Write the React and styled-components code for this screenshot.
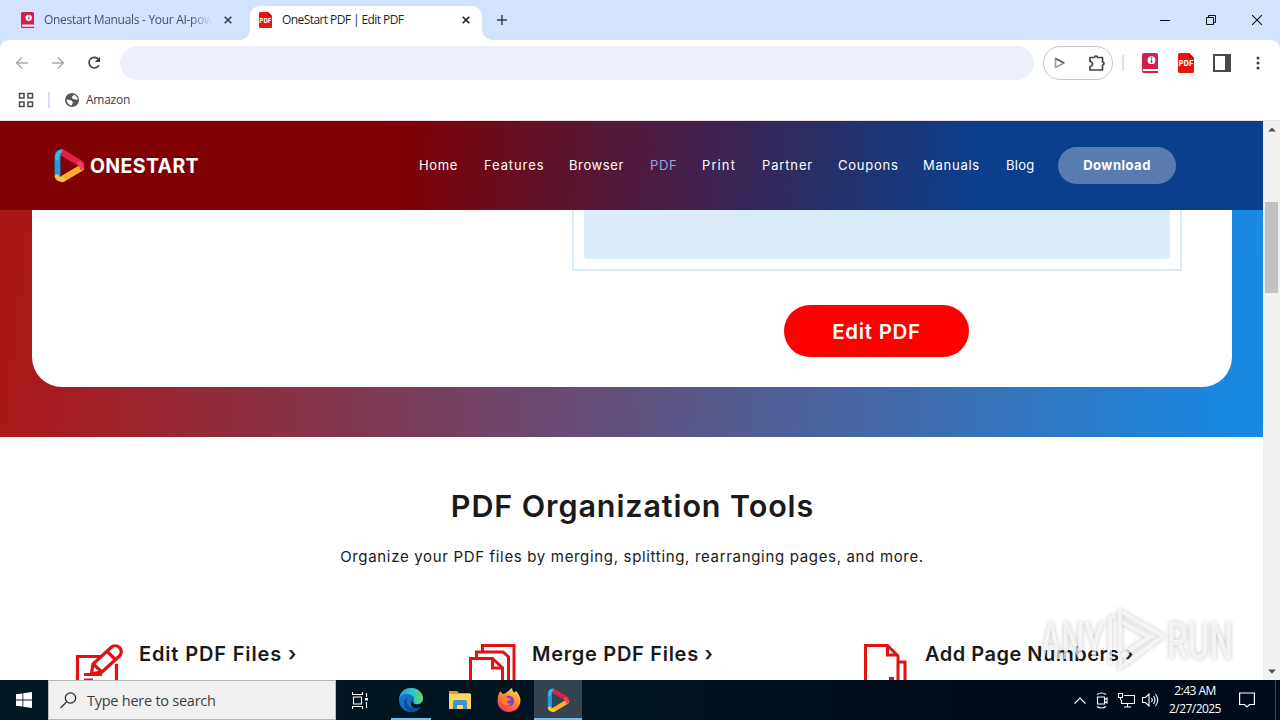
import React from 'react';
import styled, { createGlobalStyle } from 'styled-components';

const GlobalStyle = createGlobalStyle`
  * {
    box-sizing: border-box;
  }

  body {
    margin: 0;
    overflow: hidden;
    font-family: 'Open Sans', 'Noto Sans', sans-serif;
  }

  svg {
    display: block;
    flex: none;
  }
`;

const Screen = styled.div`
  position: relative;
  display: flex;
  flex-direction: column;
  width: 1280px;
  height: 720px;
  overflow: hidden;
  background: #fff;
`;

/* browser chrome */

const TabStrip = styled.div`
  display: flex;
  height: 40px;
  background: #d3e3fd;
`;

const Tab = styled.div`
  position: relative;
  display: flex;
  align-items: center;
  width: ${(props) => props.$width}px;
  height: 34px;
  margin-top: 6px;
  padding: 0 ${(props) => (props.$active ? 12 : 18)}px 6px ${(props) => props.$indent}px;
  border-radius: 10px 10px 0 0;
  background: ${(props) => (props.$active ? '#fff' : 'transparent')};
  color: ${(props) => (props.$active ? '#1f1f1f' : '#41506b')};

  &::before,
  &::after {
    content: '';
    display: ${(props) => (props.$active ? 'block' : 'none')};
    position: absolute;
    bottom: 0;
    width: 10px;
    height: 10px;
  }

  &::before {
    left: -10px;
    background: radial-gradient(circle at 0 0, transparent 9.5px, #fff 10px);
  }

  &::after {
    right: -10px;
    background: radial-gradient(circle at 100% 0, transparent 9.5px, #fff 10px);
  }
`;

const TabTitle = styled.span`
  width: ${(props) => props.$width}px;
  margin-left: 10px;
  overflow: hidden;
  white-space: nowrap;
  font-size: 12px;
  line-height: 16px;
  letter-spacing: ${(props) => props.$spacing}px;
  mask-image: ${(props) =>
    props.$fade ? 'linear-gradient(90deg, #000 87%, transparent)' : 'none'};
`;

const TabClose = styled.span`
  margin-left: auto;
`;

const NewTab = styled.div`
  padding: 15px 0 0 15px;
`;

const WindowButtons = styled.div`
  display: flex;
  gap: 36px;
  margin-left: auto;
  padding: 15px 18px 0 0;
`;

const Toolbar = styled.div`
  display: flex;
  align-items: center;
  height: 46px;
  background: #fff;
  border-radius: 9px 9px 0 0;
  box-shadow: 0 -10px 0 #d3e3fd;
`;

const NavButtons = styled.div`
  display: flex;
  gap: 20px;
  padding-left: 14px;
`;

const AddressBar = styled.div`
  width: 914px;
  height: 34px;
  margin-left: 16px;
  border-radius: 17px;
  background: #ebf0fa;
`;

const ExtensionPill = styled.div`
  display: flex;
  align-items: center;
  justify-content: space-between;
  width: 70px;
  height: 34px;
  margin-left: 9px;
  padding: 0 6px 0 9px;
  border: 1px solid #c9c4cb;
  border-radius: 17px;
`;

const Separator = styled.div`
  width: 2px;
  height: 16px;
  background: #d3e3fd;
  margin: ${(props) => props.$margin};
`;

const ToolbarIcons = styled.div`
  display: flex;
  align-items: center;
`;

const IconSlot = styled.div`
  display: flex;
  justify-content: center;
  width: 36px;
`;

const Bookmarks = styled.div`
  display: flex;
  align-items: center;
  height: 35px;
  padding: 0 0 7px 18px;
  border-bottom: 1px solid #ecdfe2;
  font-size: 12px;
  color: #3c4043;
`;

const BookmarkLabel = styled.span`
  margin-left: 7px;
  letter-spacing: -0.25px;
`;

/* web page */

const Viewport = styled.div`
  display: flex;
  height: 559px;
`;

const Page = styled.main`
  width: 1263px;
  overflow: hidden;
  background: #fff;
  font-family: Inter, 'Open Sans', sans-serif;
  color: #1a1a1a;
`;

const Header = styled.header`
  display: flex;
  align-items: center;
  height: 89px;
  padding-left: 53px;
  background: linear-gradient(95deg, #800004 31%, #0a3f8c 77%);
`;

const Brand = styled.div`
  display: flex;
  align-items: center;
  width: 366px;
  gap: 4px;
`;

const BrandName = styled.span`
  color: #fff;
  font-size: 19.5px;
  font-weight: 700;
  letter-spacing: 0.35px;
`;

const SiteNav = styled.nav`
  display: grid;
  grid-template-columns: 65px 85px 81px 52px 60px 76px 85px 83px 52px 118px;
  align-items: center;
`;

const NavLink = styled.a`
  padding-bottom: 2px;
  color: ${(props) => (props.$current ? '#93a9e0' : '#fff')};
  font-size: 13px;
  line-height: 20px;
  letter-spacing: ${(props) => props.$spacing}px;
  white-space: nowrap;
`;

const DownloadButton = styled.button`
  height: 37px;
  padding: 0 0 1px;
  border: 0;
  border-radius: 19px;
  background: #5a7bb0;
  color: #fff;
  font: 700 13px Inter, sans-serif;
  letter-spacing: 0.5px;
`;

const Hero = styled.section`
  height: 227px;
  padding: 0 31px 50px 32px;
  background: linear-gradient(97deg, #ab1717 2%, #1889e2 98%);
`;

const HeroCard = styled.div`
  display: flex;
  flex-direction: column;
  align-items: flex-end;
  width: 1200px;
  height: 177px;
  padding-right: 50px;
  border-radius: 0 0 30px 30px;
  background: #fff;
`;

const UploadFrame = styled.div`
  width: 610px;
  height: 61px;
  padding: 0 10px 10px;
  border: 2px solid #dcebf5;
  border-top: 0;
`;

const UploadArea = styled.div`
  height: 49px;
  border-radius: 0 0 3px 3px;
  background: #daecf8;
`;

const EditButton = styled.button`
  width: 185px;
  height: 52px;
  margin: 34px 213px 0 0;
  padding: 0;
  border: 0;
  border-radius: 26px;
  background: #f00;
  color: #fff;
  font: 600 20.5px Inter, sans-serif;
  letter-spacing: 0.7px;
`;

const Tools = styled.section`
  padding-top: 48px;
  text-align: center;
`;

const Title = styled.h2`
  margin: 0;
  padding-left: 2px;
  font-size: 30.5px;
  font-weight: 600;
  line-height: 42px;
  letter-spacing: 0.9px;
`;

const Subtitle = styled.p`
  margin: 17px 0 0;
  padding-left: 1px;
  font-size: 15px;
  line-height: 26px;
  letter-spacing: 0.67px;
`;

const ToolGrid = styled.div`
  display: grid;
  grid-template-columns: repeat(3, 393px);
  padding: 74px 0 0 75px;
`;

const Tool = styled.div`
  display: flex;
  gap: 16px;
`;

const ToolName = styled.h3`
  margin: -5px 0 0;
  font-size: 20px;
  font-weight: 600;
  line-height: 30px;
  letter-spacing: ${(props) => props.$spacing}px;
  white-space: nowrap;
`;

const Scrollbar = styled.div`
  display: flex;
  flex-direction: column;
  align-items: center;
  width: 17px;
  padding: 6px 0;
  background: #f1f1f1;
`;

const Thumb = styled.div`
  width: 13px;
  height: 91px;
  margin: 70px 0 auto;
  background: #c1c1c1;
`;

const Watermark = styled.div`
  position: absolute;
  left: 1034px;
  top: 604px;
  filter: drop-shadow(0 0 2px rgba(0, 0, 0, 0.32));
`;

/* taskbar */

const Taskbar = styled.footer`
  display: flex;
  height: 40px;
  background: linear-gradient(90deg, #001820 0, #00141f 50%, #000b1a 78%);
  color: #fff;
`;

const StartButton = styled.div`
  display: flex;
  align-items: center;
  justify-content: center;
  width: 48px;
`;

const SearchBox = styled.div`
  display: flex;
  align-items: center;
  gap: 10px;
  width: 288px;
  padding-left: 11px;
  border: 1px solid #b9b9b9;
  background: #f1f1f1;
  color: #3d3d3d;
  font-size: 14.5px;
  letter-spacing: -0.25px;
`;

const Pinned = styled.div`
  display: flex;
  align-items: center;
  justify-content: center;
  width: 48px;
  margin-right: ${(props) => props.$gap || 0}px;
  background: ${(props) => (props.$focused ? '#34444e' : 'none')};
  box-shadow: ${(props) => (props.$focused ? 'inset 0 -2px #76b9ed' : 'none')};
`;

const Running = styled.div`
  display: flex;
  align-items: center;
  justify-content: center;
  width: 40px;
  height: 40px;
  border-bottom: 2px solid #76b9ed;
  padding-top: 2px;
`;

const Tray = styled.div`
  display: flex;
  align-items: center;
  gap: 7px;
  margin-left: auto;
`;

const Clock = styled.div`
  width: 56px;
  font-size: 12px;
  line-height: 18px;
  letter-spacing: -0.55px;
  text-align: center;
  white-space: nowrap;
`;

const ShowDesktop = styled.div`
  width: 5px;
  height: 40px;
  margin-left: 13px;
  border-left: 1px solid #3d4853;
`;

function CrossIcon({ color = '#3c4043' }) {
  return (
    <svg width="8" height="8" viewBox="0 0 8 8">
      <path d="M0.7 0.7l6.6 6.6M7.3 0.7l-6.6 6.6" stroke={color} strokeWidth="1.6" />
    </svg>
  );
}

function ManualIcon({ width, height }) {
  return (
    <svg width={width} height={height} viewBox="0 0 16 20" preserveAspectRatio="none">
      <path d="M2 0h12q2 0 2 2v14H2q-1 0-1 1t1 1h14v2H2q-2 0-2-2V2q0-2 2-2z" fill="#d11f4c" />
      <path d="M2 16h13v2H2q-1 0-1-1t1-1z" fill="#fff" />
      <circle cx="9.5" cy="7.2" r="3.9" fill="#fff" />
      <path d="M9.5 6.5v3.3M9.5 4.3v1.3" stroke="#b0163d" strokeWidth="1.4" />
    </svg>
  );
}

function PdfIcon({ width, height }) {
  return (
    <svg width={width} height={height} viewBox="0 0 16 20" preserveAspectRatio="none">
      <path d="M1.500 0H11l5 5v13.500q0 1.500-1.500 1.500h-13Q0 20 0 18.500v-17Q0 0 1.500 0z" fill="#e8140f" />
      <path d="M11 0l5 5h-4q-1 0-1-1z" fill="#a80f0c" />
      <text
        x="8"
        y="13.400"
        fill="#fff"
        fontFamily="Inter, sans-serif"
        fontSize="7"
        fontWeight="800"
        textAnchor="middle"
        textLength="14.500"
      >
        PDF
      </text>
    </svg>
  );
}

function OneStartMark({ width, height }) {
  return (
    <svg width={width} height={height} viewBox="0 0 32 34" fill="none" strokeLinecap="round">
      <path d="M9 30L27.500 19" stroke="#fbb02d" strokeWidth="6.200" />
      <path d="M4 27V8q0-4 4-5" stroke="#1f9be6" strokeWidth="5.800" />
      <path d="M9.500 4L27 14.500" stroke="#e0214d" strokeWidth="6.200" />
      <path d="M7 2.500Q3.500 4 3.500 10" stroke="#34bde8" strokeWidth="3.500" />
      <path d="M25.500 14q4 2 2.500 5" stroke="#ef4056" strokeWidth="4" />
      <path d="M3.500 27.500q1 3.500 6 2.800" stroke="#f9c43a" strokeWidth="4.500" />
    </svg>
  );
}

function EditFileIcon() {
  return (
    <svg width="48" height="48" viewBox="0 0 48 48" fill="none" stroke="#e01212" strokeWidth="3.200">
      <path d="M27 12.500H2.500V46.500h39V20M9 30.500h18M9 36.200h9" />
      <path d="M16.500 29.500l1.500-9.500L36 3.500a6 6 0 0 1 8.500 8.500L27 28l-10.500 1.500z" />
      <path d="M18 20l9 8M31.500 7l9 8.500" />
    </svg>
  );
}

function MergeFilesIcon() {
  return (
    <svg width="48" height="48" viewBox="0 0 48 48" fill="none" stroke="#e01212" strokeWidth="3">
      <path d="M2.500 46V14.500h22l10 9.500V46z" />
      <path d="M24.500 14.500v9.500h9M8.500 13V8h26.500l5.500 5v33M14.500 7V1.500h31.500V46" />
    </svg>
  );
}

function PageNumbersIcon() {
  return (
    <svg width="48" height="48" viewBox="0 0 48 48" fill="none" stroke="#e01212" strokeWidth="3">
      <path d="M37 46H4.500V1.500h22L37 12V46z" />
      <path d="M26.500 1.500V11H37M38 18h6v28M28 34.500h5" />
    </svg>
  );
}

const navItems = [
  { label: 'Home', spacing: 0.6 },
  { label: 'Features', spacing: 0.9 },
  { label: 'Browser', spacing: 0.6 },
  { label: 'PDF', spacing: 0.7, current: true },
  { label: 'Print', spacing: 1.1 },
  { label: 'Partner', spacing: 0.85 },
  { label: 'Coupons', spacing: 0.75 },
  { label: 'Manuals', spacing: 0.75 },
  { label: 'Blog', spacing: 0.3 },
];

const tools = [
  { name: 'Edit PDF Files ›', spacing: 0.85, icon: <EditFileIcon /> },
  { name: 'Merge PDF Files ›', spacing: 0.7, icon: <MergeFilesIcon /> },
  { name: 'Add Page Numbers ›', spacing: 0.5, icon: <PageNumbersIcon /> },
];

function BrowserChrome() {
  return (
    <>
      <TabStrip>
        <Tab $width={250} $indent={21}>
          <ManualIcon width={13} height={16} />
          <TabTitle $width={168} $spacing={-0.3} $fade>
            Onestart Manuals - Your AI-powered
          </TabTitle>
          <TabClose>
            <CrossIcon />
          </TabClose>
        </Tab>
        <Tab $active $width={232} $indent={9}>
          <PdfIcon width={13} height={16} />
          <TabTitle $width={160} $spacing={-0.58}>
            OneStart PDF | Edit PDF
          </TabTitle>
          <TabClose>
            <CrossIcon color="#1f1f1f" />
          </TabClose>
        </Tab>
        <NewTab>
          <svg width="10" height="10" viewBox="0 0 10 10" stroke="#3c4043" strokeWidth="1.500">
            <path d="M5 0v10M0 5h10" />
          </svg>
        </NewTab>
        <WindowButtons>
          <svg width="10" height="10" viewBox="0 0 10 10">
            <path d="M0 5.500h10" stroke="#111" />
          </svg>
          <svg width="10" height="10" viewBox="0 0 10 10" fill="none" stroke="#111">
            <path d="M0.500 2.500h7v7h-7zM2.500 2.500v-2h7v7h-2" />
          </svg>
          <svg width="10" height="10" viewBox="0 0 10 10">
            <path d="M0 0l10 10M10 0L0 10" stroke="#111" strokeWidth="1.100" />
          </svg>
        </WindowButtons>
      </TabStrip>
      <Toolbar>
        <NavButtons>
          <svg width="16" height="16" viewBox="0 0 16 16" fill="none" stroke="#aaa" strokeWidth="1.500">
            <path d="M14 8H3M8 2.500L2.500 8 8 13.500" />
          </svg>
          <svg width="16" height="16" viewBox="0 0 16 16" fill="none" stroke="#aaa" strokeWidth="1.500">
            <path d="M2 8h11M8 2.500L13.500 8 8 13.500" />
          </svg>
          <svg width="18" height="16" viewBox="0 0 18 16" fill="none" stroke="#3c4043" strokeWidth="1.600">
            <path d="M12.400 4.200A5.300 5.300 0 1 0 13 10.200" />
            <path d="M14 1.800v5.200H8.800z" fill="#3c4043" stroke="none" />
          </svg>
        </NavButtons>
        <AddressBar />
        <ExtensionPill>
          <svg width="14" height="12" viewBox="0 0 14 12" fill="none" strokeLinejoin="round">
            <path d="M2.500 1.500v9l8.500-4.500z" stroke="#a0a0a0" strokeWidth="1.700" />
            <path d="M2.500 1.500L11 6" stroke="#666" strokeWidth="1.700" />
          </svg>
          <svg width="20" height="20" viewBox="0 0 20 20" fill="none" stroke="#3f4346" strokeWidth="1.700">
            <path
              strokeLinejoin="round"
              d="M4 4.500h4.500a1.500 1.500 0 0 1 3 0h5v4.500a1.500 1.500 0 0 1 0 3V17H4v-3.500a2.500 2.500 0 0 0 0-5z"
            />
          </svg>
        </ExtensionPill>
        <Separator $margin="0 8px 0 9px" />
        <ToolbarIcons>
          <IconSlot>
            <ManualIcon width={16} height={20} />
          </IconSlot>
          <IconSlot>
            <PdfIcon width={16} height={20} />
          </IconSlot>
          <IconSlot>
            <svg width="18" height="18" viewBox="0 0 18 18">
              <path d="M1 1h16v16H1z" fill="#fff" stroke="#4a4a4a" strokeWidth="2" />
              <path d="M12 0h6v18h-6z" fill="#4a4a4a" />
            </svg>
          </IconSlot>
          <IconSlot>
            <svg width="4" height="14" viewBox="0 0 4 14" fill="#3c4043">
              <circle cx="2" cy="2" r="1.500" />
              <circle cx="2" cy="7" r="1.500" />
              <circle cx="2" cy="12" r="1.500" />
            </svg>
          </IconSlot>
        </ToolbarIcons>
      </Toolbar>
      <Bookmarks>
        <svg width="16" height="16" viewBox="0 0 16 16" fill="none" stroke="#4a4d50" strokeWidth="1.500">
          <path d="M1.500 1.500h4.500v4.500h-4.500zM10 1.500h4.500v4.500h-4.500zM1.500 10h4.500v4.500h-4.500zM10 10h4.500v4.500h-4.500z" />
        </svg>
        <Separator $margin="0 15px 0 14px" />
        <svg width="14" height="14" viewBox="0 0 14 14">
          <circle cx="7" cy="7" r="7" fill="#56595c" />
          <path
            fill="#fff"
            d="M8.500 1.600Q12 2.600 12.600 6.500q-1.200.8-2.200 0T8.500 6 7 4.800 8.300 3zM1.500 6.500L5 7q2 .2 2 1.600l1.500.9L7 10.800v1.700Q2.300 12 1.500 6.500z"
          />
        </svg>
        <BookmarkLabel>Amazon</BookmarkLabel>
      </Bookmarks>
    </>
  );
}

function WebPage() {
  return (
    <Page>
      <Header>
        <Brand>
          <OneStartMark width={33} height={34} />
          <BrandName>ONESTART</BrandName>
        </Brand>
        <SiteNav>
          {navItems.map((item) => (
            <NavLink key={item.label} $spacing={item.spacing} $current={item.current}>
              {item.label}
            </NavLink>
          ))}
          <DownloadButton>Download</DownloadButton>
        </SiteNav>
      </Header>
      <Hero>
        <HeroCard>
          <UploadFrame>
            <UploadArea />
          </UploadFrame>
          <EditButton>Edit PDF</EditButton>
        </HeroCard>
      </Hero>
      <Tools>
        <Title>PDF Organization Tools</Title>
        <Subtitle>
          Organize your PDF files by merging, splitting, rearranging pages, and more.
        </Subtitle>
        <ToolGrid>
          {tools.map((tool) => (
            <Tool key={tool.name}>
              {tool.icon}
              <ToolName $spacing={tool.spacing}>{tool.name}</ToolName>
            </Tool>
          ))}
        </ToolGrid>
      </Tools>
    </Page>
  );
}

function DesktopTaskbar() {
  return (
    <Taskbar>
      <StartButton>
        <svg width="16" height="16" viewBox="0 0 16 16" fill="#fff">
          <path d="M0 2.300l6.500-.9v6.200H0zM7.300 1.300L16 0v7.600H7.300zM0 8.400h6.500v6.200L0 13.700zM7.300 8.400H16V16l-8.700-1.300z" />
        </svg>
      </StartButton>
      <SearchBox>
        <svg width="17" height="17" viewBox="0 0 17 17" fill="none" stroke="#222" strokeWidth="1.200">
          <circle cx="10.500" cy="6" r="5.200" />
          <path d="M6.800 9.700L0.600 16" />
        </svg>
        Type here to search
      </SearchBox>
      <Pinned $gap={3}>
        <svg width="17" height="17" viewBox="0 0 17 17" fill="none" stroke="#fff" strokeWidth="1.100">
          <path d="M0.500 0v2.500h10V0M0.500 17v-2.500h10V17M1.500 5h8v7h-8zM14.500 1v4M14.500 10v6" />
          <path d="M13 6h3v2.500h-3z" fill="#fff" stroke="none" />
        </svg>
      </Pinned>
      <Pinned $gap={1}>
        <Running>
          <svg width="24" height="24" viewBox="0 0 24 24">
            <defs>
              <linearGradient id="edgeTop" x1="0" x2="1">
                <stop offset="0" stopColor="#229fe0" />
                <stop offset="0.600" stopColor="#30c6c4" />
                <stop offset="1" stopColor="#66d957" />
              </linearGradient>
            </defs>
            <circle cx="12" cy="12" r="12" fill="#1670c8" />
            <path d="M0 11C1 3 7 0 12 0c7 0 12 5 12 10 0 4-3 6-6 6-3.500 0-4-1.500-3.500-2.500C17 9 12 6 8 6c-4 0-7 2-8 5z" fill="url(#edgeTop)" />
            <path d="M9 9c-3 5 0 12 8 11.500 2.500 0 4-1 5-1.500-3 4-8 6-12 4.500C4 21 3 11 9 9z" fill="#0f4fa0" />
            <path d="M14.500 13.500C14 15.500 16 17 19 16.500c2-.3 3.500-1 5-3.500l.5 5-2 1c-4 2-9 1.500-10.500-2-.8-2 .5-3.500 1.500-4z" fill="#00141f" />
          </svg>
        </Running>
      </Pinned>
      <Pinned $gap={1}>
        <svg width="22" height="20" viewBox="0 0 22 20">
          <path d="M0 1h8l2 2h11v4H0z" fill="#e09a2b" />
          <path d="M0 4h22v15H0z" fill="#fcd462" />
          <path d="M4 19v-7q0-2 2-2h10q2 0 2 2v7h-4v-4H8v4z" fill="#3e92d1" />
        </svg>
      </Pinned>
      <Pinned $gap={1}>
        <svg width="24" height="24" viewBox="0 0 24 24">
          <defs>
            <linearGradient id="foxFlame" x1="0.800" y1="0" x2="0.200" y2="1">
              <stop offset="0" stopColor="#ffe14a" />
              <stop offset="0.450" stopColor="#ff8a2b" />
              <stop offset="1" stopColor="#f8295c" />
            </linearGradient>
          </defs>
          <path
            d="M3 3l3 3 3-1q1-2 3-2 .5-2 3-3 0 3 2.500 4.500L19 3q4 4 4.500 9c0 7-5 12-11.500 12S.5 19 .5 13Q.5 7 3 3z"
            fill="url(#foxFlame)"
          />
          <circle cx="12" cy="13" r="5.200" fill="#7841d6" />
          <path d="M5 10q4-2 6 0l3 1q-1 2-4 2 0 3 4 2.500-3 3.500-7 1.500Q4 14 5 10z" fill="#ff7c31" />
        </svg>
      </Pinned>
      <Pinned $focused>
        <OneStartMark width={23} height={25} />
      </Pinned>
      <Tray>
        <svg width="12" height="7" viewBox="0 0 12 7" fill="none" stroke="#fff" strokeWidth="1.200">
          <path d="M0.500 6.500L6 1l5.500 5.500" />
        </svg>
        <svg width="18" height="17" viewBox="0 0 18 17" fill="none" stroke="#fff" strokeWidth="1.100">
          <path d="M4.500 5h7v7h-7zM11.500 7.500L14 6v5l-2.500-1.500M4 2.500q4.500-3 9 0M4 14.500q4.500 3 9 0" />
        </svg>
        <svg width="17" height="15" viewBox="0 0 17 15" fill="none" stroke="#fff" strokeWidth="1.100">
          <path d="M6 2.500h10.500v8H3.500V7M9.500 10.500v3.500M6 14h7M0.500 0.500h4v4h-4zM2.500 4.500V7" />
        </svg>
        <svg width="17" height="14" viewBox="0 0 17 14" fill="none" stroke="#fff" strokeWidth="1.100">
          <path d="M0.500 4.500h3l3.500-3.500v12L3.500 9.500h-3zM9.500 5q1.500 2 0 4M11.500 3q3 4 0 8M13.500 1q4.500 6 0 12" />
        </svg>
        <Clock style={{ marginLeft: 1 }}>
          2:43 AM
          <br />
          2/27/2025
        </Clock>
        <svg width="16" height="17" viewBox="0 0 16 17" fill="none" stroke="#fff" strokeWidth="1.200" style={{ marginLeft: 9 }}>
          <path d="M0.600 1h14.800v11.500H10.500L8 15l-2.500-2.500h-4.900z" />
        </svg>
        <ShowDesktop />
      </Tray>
    </Taskbar>
  );
}

function App() {
  return (
    <Screen>
      <GlobalStyle />
      <BrowserChrome />
      <Viewport>
        <WebPage />
        <Scrollbar>
          <svg width="8" height="5" viewBox="0 0 8 5">
            <path d="M0 4.500L4 0.500l4 4z" fill="#505050" />
          </svg>
          <Thumb />
          <svg width="8" height="5" viewBox="0 0 8 5">
            <path d="M0 0.500l4 4 4-4z" fill="#505050" />
          </svg>
        </Scrollbar>
      </Viewport>
      <DesktopTaskbar />
      <Watermark>
        <svg width="214" height="72" viewBox="0 0 214 72">
          <g
            fill="#fff"
            fillOpacity="0.700"
            fontFamily="Roboto, sans-serif"
            fontSize="51"
            fontWeight="500"
          >
            <text x="6" y="55" textLength="64" lengthAdjust="spacingAndGlyphs">
              ANY
            </text>
            <text x="133" y="55" textLength="66" lengthAdjust="spacingAndGlyphs">
              RUN
            </text>
          </g>
          <g fill="none" stroke="#fff" strokeOpacity="0.700" strokeWidth="4" strokeLinejoin="round">
            <path d="M86 47V7l43 25-43 32V53l29-20-29-16" />
            <path d="M76 60V14l5-3" />
          </g>
        </svg>
      </Watermark>
    </Screen>
  );
}

export default App;
